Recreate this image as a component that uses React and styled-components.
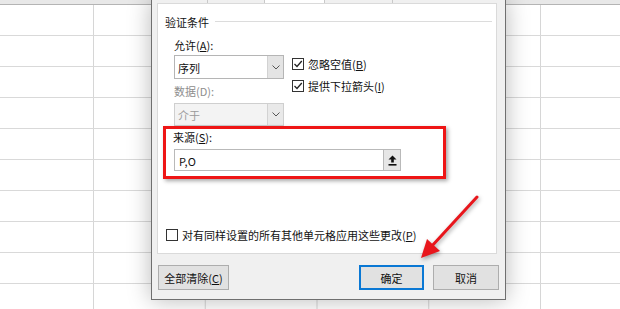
import React from "react";
import styled, { createGlobalStyle } from "styled-components";

const Global = createGlobalStyle`
  html, body { margin: 0; padding: 0; background: #fff; }
  body { font-family: "Noto Sans CJK SC", "Noto Sans", sans-serif; }
`;

const Sheet = styled.div`
  position: relative;
  width: 620px;
  height: 309px;
  overflow: hidden;
  background-color: #fff;
  background-image:
    linear-gradient(to bottom, #e8e8e8 0 4px, #b4b4b4 4px 5px, transparent 5px),
    linear-gradient(to bottom, #d9d9d9 1px, transparent 1px),
    linear-gradient(to right, #d6d6d6 1px, transparent 1px);
  background-size: 100% 5px, 100% 31px, 111.75px 100%;
  background-position: 0 0, 0 35px, 93px 0;
  background-repeat: no-repeat, repeat, repeat;
`;

const Dialog = styled.div`
  position: absolute;
  left: 151px;
  top: -1px;
  width: 353px;
  display: flex;
  flex-direction: column;
  background: #f0f0f0;
  border: 1px solid #6f6f6f;
  box-shadow: 0 0 22px rgba(0, 0, 0, 0.28);
  font-size: 11px;
  color: #111;
`;

const TabStrip = styled.div`
  height: 3px;
  display: flex;
  padding-left: 55px;
`;

const Tab = styled.div`
  width: ${(p) => p.$w}px;
  border-left: 1px solid #c9c9c9;
  background: ${(p) => (p.$active ? "#fff" : "#f0f0f0")};
`;

const Panel = styled.div`
  margin: 0 8px 0 5px;
  background: #fff;
  border: 1px solid #dadada;
  padding: 10px 0 10px 0;
  display: flex;
  flex-direction: column;
`;

const Heading = styled.div`
  display: flex;
  align-items: center;
  gap: 6px;
  padding-left: 7px;
  padding-right: 4px;
  line-height: 16px;
  &::after {
    content: "";
    flex: 1;
    height: 1px;
    background: #dcdcdc;
    margin-top: -2px;
  }
`;

const FieldsRow = styled.div`
  display: flex;
  gap: 8px;
  margin-top: 7px;
  padding-left: 16px;
`;

const LeftCol = styled.div`
  display: flex;
  flex-direction: column;
  width: 110px;
`;

const RightCol = styled.div`
  display: flex;
  flex-direction: column;
  gap: 6px;
  padding-top: 19px;
`;

const Label = styled.div`
  line-height: 16px;
  color: ${(p) => (p.$disabled ? "#8d8d8d" : "#111")};
  margin-top: ${(p) => p.$mt || 0}px;
  padding-left: ${(p) => p.$pl || 0}px;
`;

const Select = styled.div`
  margin-top: ${(p) => p.$mt}px;
  height: ${(p) => p.$h}px;
  box-sizing: border-box;
  display: flex;
  border: 1px solid ${(p) => (p.$disabled ? "#cfcfcf" : "#b5b5b5")};
  background: ${(p) => (p.$disabled ? "#f3f3f3" : "#fff")};
  color: ${(p) => (p.$disabled ? "#9a9a9a" : "#111")};
`;

const SelectText = styled.div`
  flex: 1;
  display: flex;
  align-items: center;
  padding-left: 3px;
  padding-top: 1px;
`;

const SelectButton = styled.div`
  width: 15px;
  display: flex;
  align-items: center;
  justify-content: center;
  background: ${(p) => (p.$disabled ? "#e9e9e9" : "#e4e4e4")};
  border-left: 1px solid #d2d2d2;
`;

const CheckRow = styled.div`
  display: flex;
  align-items: center;
  gap: 4px;
  line-height: 16px;
  margin-top: ${(p) => p.$mt || 0}px;
  padding-left: ${(p) => p.$pl || 0}px;
`;

const Box = styled.span`
  width: 12px;
  height: 12px;
  box-sizing: border-box;
  border: 1px solid #333;
  background: #fff;
  display: inline-flex;
  align-items: center;
  justify-content: center;
`;

const Highlight = styled.div`
  margin-left: 5px;
  width: 283px;
  height: 53px;
  box-sizing: border-box;
  border: 3px solid #ee1515;
  box-shadow: 2px 2px 4px rgba(0, 0, 0, 0.35);
  display: flex;
  flex-direction: column;
  padding-left: 7px;
`;

const SourceRow = styled.div`
  display: flex;
  margin-top: 4px;
  margin-left: 1px;
  height: 22px;
`;

const SourceInput = styled.div`
  width: 209px;
  box-sizing: border-box;
  border: 1px solid #b9b9b9;
  border-right: none;
  display: flex;
  align-items: center;
  padding-left: 4px;
  padding-top: 1px;
`;

const PickButton = styled.div`
  width: 18px;
  box-sizing: border-box;
  border: 1px solid #b9b9b9;
  background: #e6e6e6;
  display: flex;
  align-items: center;
  justify-content: center;
`;

const Footer = styled.div`
  display: flex;
  margin-top: 11px;
  padding: 0 5px 9px 6px;
`;

const Button = styled.div`
  width: ${(p) => p.$w}px;
  height: 25px;
  box-sizing: border-box;
  margin-left: ${(p) => p.$ml || 0}px;
  background: #e1e1e1;
  border: ${(p) => (p.$primary ? "2px solid #0a78d4" : "1px solid #adadad")};
  display: flex;
  align-items: center;
  justify-content: center;
`;

const Arrow = styled.svg`
  position: absolute;
  left: 0;
  top: 0;
  pointer-events: none;
  filter: drop-shadow(1px 2px 2px rgba(0, 0, 0, 0.35));
`;

const Chevron = () => (
  <svg width="8" height="5" viewBox="0 0 8 5">
    <path d="M0.5 0.5 L4 4 L7.5 0.5" fill="none" stroke="#555" strokeWidth="1" />
  </svg>
);

const Check = () => (
  <svg width="10" height="10" viewBox="0 0 10 10">
    <path d="M1.5 5 L4 7.5 L8.8 2" fill="none" stroke="#222" strokeWidth="1.3" />
  </svg>
);

const UploadIcon = () => (
  <svg width="9" height="11" viewBox="0 0 9 11">
    <path d="M4.5 0.5 L8.5 4.5 L5.8 4.5 L5.8 7.5 L3.2 7.5 L3.2 4.5 L0.5 4.5 Z" fill="#111" />
    <rect x="0.5" y="9" width="8" height="1.6" fill="#111" />
  </svg>
);

const Checkbox = ({ checked, children, ...rest }) => (
  <CheckRow {...rest}>
    <Box>{checked && <Check />}</Box>
    <span>{children}</span>
  </CheckRow>
);

export default function App() {
  return (
    <>
      <Global />
      <Sheet>
        <Dialog>
          <TabStrip>
            <Tab $w={56} />
            <Tab $w={59} $active />
            <Tab $w={67} />
            <Tab $w={60} />
          </TabStrip>
          <Panel>
            <Heading>验证条件</Heading>
            <FieldsRow>
              <LeftCol>
                <Label>
                  允许(<u>A</u>):
                </Label>
                <Select $mt={2} $h={24}>
                  <SelectText>序列</SelectText>
                  <SelectButton>
                    <Chevron />
                  </SelectButton>
                </Select>
                <Label $disabled $mt={4}>
                  数据(D):
                </Label>
                <Select $mt={4} $h={23} $disabled>
                  <SelectText>介于</SelectText>
                  <SelectButton $disabled>
                    <Chevron />
                  </SelectButton>
                </Select>
              </LeftCol>
              <RightCol>
                <Checkbox checked>
                  忽略空值(<u>B</u>)
                </Checkbox>
                <Checkbox checked>
                  提供下拉箭头(<u>I</u>)
                </Checkbox>
              </RightCol>
            </FieldsRow>
            <Highlight>
              <Label>
                来源(<u>S</u>):
              </Label>
              <SourceRow>
                <SourceInput>P,O</SourceInput>
                <PickButton>
                  <UploadIcon />
                </PickButton>
              </SourceRow>
            </Highlight>
            <Checkbox $mt={48} $pl={8}>
              对有同样设置的所有其他单元格应用这些更改(<u>P</u>)
            </Checkbox>
          </Panel>
          <Footer>
            <Button $w={71}>
              全部清除(<u>C</u>)
            </Button>
            <Button $w={65} $ml={130} $primary>
              确定
            </Button>
            <Button $w={66} $ml={9}>
              取消
            </Button>
          </Footer>
        </Dialog>
        <Arrow width="620" height="309" viewBox="0 0 620 309">
          <line x1="477" y1="197" x2="431" y2="247" stroke="#e8161c" strokeWidth="3" strokeLinecap="round" />
          <polygon points="421,258 427,239 440,251" fill="#e8161c" />
        </Arrow>
      </Sheet>
    </>
  );
}
